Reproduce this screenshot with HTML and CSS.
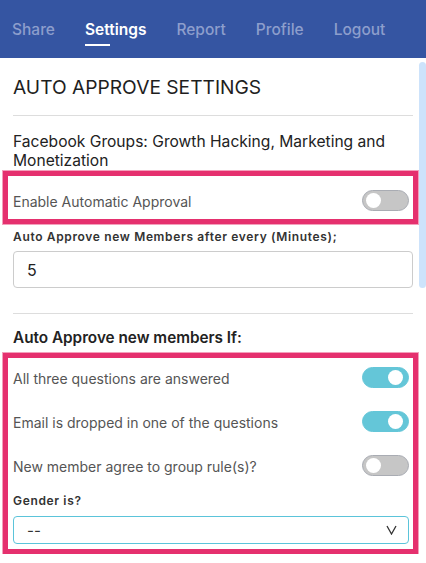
FILE: index.html
```html
<!DOCTYPE html>
<html lang="en">
<head>
    <meta charset="UTF-8">
    <meta name="viewport" content="width=device-width, initial-scale=1.0">
    <title>Settings - Auto Approve</title>
    <link rel="stylesheet" href="styles.css">
</head>
<body>
    <nav class="tabs">
        <a href="#">Share</a>
        <a href="#" class="active">Settings</a>
        <a href="#">Report</a>
        <a href="#">Profile</a>
        <a href="#">Logout</a>
    </nav>

    <div class="panel">
        <div class="scroll-thumb"></div>

        <h1>AUTO APPROVE SETTINGS</h1>
        <hr>

        <h3 class="group-name">Facebook Groups: Growth Hacking, Marketing and Monetization</h3>

        <div class="highlight first">
            <div class="switch-row">
                <span>Enable Automatic Approval</span>
                <label class="switch">
                    <input type="checkbox">
                    <span class="slider"></span>
                </label>
            </div>
        </div>

        <div class="form-group">
            <label class="small-label" for="minutes">Auto Approve new Members after every (Minutes);</label>
            <input type="text" id="minutes" class="text-input" value="5">
        </div>

        <hr>

        <h4>Auto Approve new members If:</h4>

        <div class="highlight rules">
            <div class="switch-row">
                <span>All three questions are answered</span>
                <label class="switch">
                    <input type="checkbox" checked>
                    <span class="slider"></span>
                </label>
            </div>
            <div class="switch-row">
                <span>Email is dropped in one of the questions</span>
                <label class="switch">
                    <input type="checkbox" checked>
                    <span class="slider"></span>
                </label>
            </div>
            <div class="switch-row">
                <span>New member agree to group rule(s)?</span>
                <label class="switch">
                    <input type="checkbox">
                    <span class="slider"></span>
                </label>
            </div>

            <label class="small-label gender" for="gender">Gender is?</label>
            <div class="select-box" id="gender">
                <span>--</span>
                <svg width="11" height="10" viewBox="0 0 11 10">
                    <polyline points="1,1 5.5,9 10,1" fill="none" stroke="#333" stroke-width="1.3"/>
                </svg>
            </div>
        </div>
    </div>
</body>
</html>
```

FILE: styles.css
```css
body {
    margin: 0;
    font-family: Inter, "Liberation Sans", sans-serif;
    background-color: white;
    color: #222;
}
.tabs {
    display: flex;
    gap: 30px;
    height: 58px;
    padding: 0 12px;
    background-color: #3555a2;
    box-sizing: border-box;
}
.tabs a {
    position: relative;
    padding-top: 20px;
    font-size: 15.5px;
    font-weight: 500;
    color: #8d9ecc;
    text-decoration: none;
}
.tabs a.active {
    color: white;
    font-weight: 600;
}
.tabs a.active::after {
    content: "";
    position: absolute;
    left: 0;
    top: 44px;
    width: 25px;
    height: 2px;
    background-color: white;
}
.panel {
    position: relative;
    padding: 17px 13px 0 13px;
    width: 400px;
}
.scroll-thumb {
    position: absolute;
    left: 419px;
    top: 4px;
    width: 7px;
    height: 226px;
    border-radius: 4px;
    background-color: #cde3fb;
}
h1 {
    margin: 0;
    font-size: 19.2px;
    line-height: 24px;
    font-weight: 400;
    color: #1e1e1e;
}
hr {
    margin: 16px 0 0 0;
    border: none;
    border-top: 1px solid #ddd;
}
.group-name {
    margin: 16px 0 1px 0;
    font-size: 15.6px;
    line-height: 19px;
    font-weight: 400;
    color: #222;
}
.highlight {
    margin: 0 -5px 0 -10px;
    padding: 0 4px 0 5px;
    border: 5px solid #e5306e;
    box-shadow: 0 0 0 1px #f3a0bb;
}
.highlight.first {
    padding-top: 14px;
    padding-bottom: 8px;
}
.switch-row {
    display: flex;
    justify-content: space-between;
    align-items: center;
    font-size: 14px;
    color: #555;
}
.switch-row span {
    padding-top: 1px;
}
.switch {
    position: relative;
    display: inline-block;
    width: 47px;
    height: 21px;
}
.switch input {
    display: none;
}
.slider {
    position: absolute;
    inset: 0;
    border-radius: 11px;
    background-color: #c6c6c6;
    border: 1px solid #a9acb3;
    box-sizing: border-box;
    cursor: pointer;
}
.slider::before {
    content: "";
    position: absolute;
    left: 3px;
    top: 2px;
    width: 15px;
    height: 15px;
    border-radius: 50%;
    background-color: white;
}
.switch input:checked + .slider {
    background-color: #64c6d8;
    border-color: #64c6d8;
}
.switch input:checked + .slider::before {
    left: auto;
    right: 5px;
}
.form-group {
    margin-top: 5px;
}
.small-label {
    display: block;
    font-size: 12px;
    line-height: 15px;
    font-weight: 600;
    letter-spacing: 0.65px;
    color: #333;
    margin-bottom: 7px;
}
.text-input {
    display: block;
    width: 100%;
    height: 37px;
    padding: 0 13px;
    font-family: inherit;
    font-size: 16px;
    color: #222;
    border: 1px solid #ccc;
    border-radius: 4px;
    box-sizing: border-box;
}
.form-group + hr {
    margin-top: 25px;
}
h4 {
    margin: 15px 0 6px 0;
    font-size: 15.3px;
    line-height: 18px;
    font-weight: 600;
    color: #222;
}
.highlight.rules {
    padding-top: 9px;
    padding-bottom: 5px;
}
.rules .switch-row {
    margin-bottom: 23px;
}
.rules .switch-row:nth-child(3) {
    margin-bottom: 17px;
}
.small-label.gender {
    margin-bottom: 8px;
}
.select-box {
    display: flex;
    justify-content: space-between;
    align-items: center;
    height: 28px;
    padding: 0 11px 0 13px;
    border: 1px solid #5bc4da;
    border-radius: 4px;
    font-size: 15px;
    color: #333;
    box-sizing: border-box;
}
```
